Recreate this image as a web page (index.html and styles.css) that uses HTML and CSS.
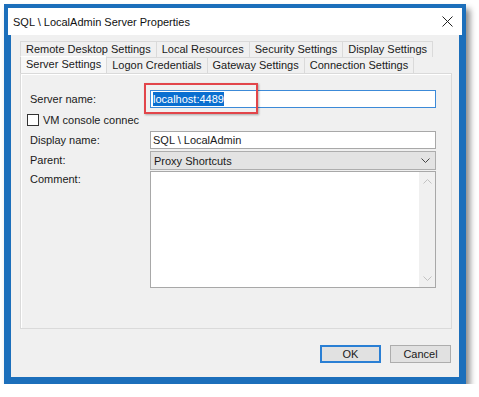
FILE: index.html
```html
<!DOCTYPE html>
<html lang="en">
<head>
  <meta charset="UTF-8">
  <title>SQL \ LocalAdmin Server Properties</title>
  <link rel="stylesheet" href="styles.css">
</head>
<body>

  <div class="window">
    <div class="titlebar">
      <span>SQL \ LocalAdmin Server Properties</span>
      <svg class="close" width="11" height="11" viewBox="0 0 11 11">
        <path d="M0.5 0.5 L10.5 10.5 M10.5 0.5 L0.5 10.5" stroke="#222" stroke-width="1" fill="none"/>
      </svg>
    </div>

    <div class="dialog">
      <!-- tab strip, two rows -->
      <div class="tab-row">
        <div class="tab">Remote Desktop Settings</div>
        <div class="tab">Local Resources</div>
        <div class="tab">Security Settings</div>
        <div class="tab">Display Settings</div>
      </div>
      <div class="tab-row">
        <div class="tab active">Server Settings</div>
        <div class="tab">Logon Credentials</div>
        <div class="tab">Gateway Settings</div>
        <div class="tab">Connection Settings</div>
      </div>

      <div class="panel">
        <div class="form">
          <label class="lbl">Server name:</label>
          <div class="field focused"><span class="selected">localhost:4489</span></div>

          <div class="check-row">
            <span class="checkbox"></span>
            <span class="check-label">VM console connec</span>
          </div>

          <label class="lbl">Display name:</label>
          <div class="field">SQL \ LocalAdmin</div>

          <label class="lbl">Parent:</label>
          <div class="select">
            <span>Proxy Shortcuts</span>
            <svg width="9" height="6" viewBox="0 0 9 6"><path d="M0.5 0.5 L4.5 4.5 L8.5 0.5" stroke="#444" fill="none"/></svg>
          </div>

          <label class="lbl comment-lbl">Comment:</label>
          <div class="textarea">
            <div class="scrollbar">
              <svg width="9" height="6" viewBox="0 0 9 6"><path d="M0.5 5.5 L4.5 1.5 L8.5 5.5" stroke="#c2c2c2" fill="none"/></svg>
              <svg width="9" height="6" viewBox="0 0 9 6"><path d="M0.5 0.5 L4.5 4.5 L8.5 0.5" stroke="#c2c2c2" fill="none"/></svg>
            </div>
          </div>
        </div>

        <!-- annotation box drawn over the screenshot -->
        <div class="callout"></div>
      </div>

      <div class="buttons">
        <button class="btn default">OK</button>
        <button class="btn">Cancel</button>
      </div>
    </div>
  </div>

</body>
</html>
```

FILE: styles.css
```css
body {
  margin: 0;
  background-color: #fff;
  font-family: "Liberation Sans", Arial, sans-serif;
  font-size: 11px;
  color: #1a1a1a;
}
.window {
  margin: 4px 0 0 4px;
  width: 462px;
  height: 380px;
  box-sizing: border-box;
  border: 4px solid #1c6fbb;
  display: flex;
  flex-direction: column;
  box-shadow: 4px 5px 6px rgba(0, 0, 0, 0.45);
}
.titlebar {
  height: 27px;
  background-color: #fff;
  display: flex;
  align-items: center;
  justify-content: space-between;
  padding: 0 9px 0 5px;
  font-size: 11px;
  color: #111;
}
.dialog {
  flex: 1;
  background-color: #f0f0f0;
  border: 3px solid #1c6fbb;
  border-top: none;
  padding: 6px 8px 0 9px;
  display: flex;
  flex-direction: column;
}
.tab-row {
  display: flex;
  height: 16px;
}
.tab {
  box-sizing: border-box;
  height: 16px;
  line-height: 14px;
  padding: 0 5px;
  border: 1px solid #dadada;
  border-bottom: none;
  margin-right: -1px;
  background-color: #f0f0f0;
  white-space: nowrap;
}
.tab.active {
  background-color: #f7f7f7;
  border-color: #fff;
  border-left-color: #d0d0d0;
  border-right-color: #d0d0d0;
  height: 17px;
  margin-top: -1px;
}
.panel {
  position: relative;
  box-sizing: border-box;
  width: 432px;
  height: 256px;
  border: 1px solid #dadada;
  box-shadow: inset 1px 1px 0 #fff;
  padding: 16px 0 0 9px;
}
.form {
  display: grid;
  grid-template-columns: 120px 286px;
  align-items: center;
}
.lbl {
  color: #1a1a1a;
}
.field {
  box-sizing: border-box;
  height: 18px;
  line-height: 16px;
  padding: 0 2px;
  border: 1px solid #a8a8a8;
  background-color: #fff;
  white-space: nowrap;
}
.field.focused {
  border-color: #3c8ad8;
}
.selected {
  background-color: #0a6fd0;
  color: #fff;
  padding: 1px 0;
}
.check-row {
  grid-column: 1 / 3;
  display: flex;
  align-items: center;
  gap: 4px;
  height: 23px;
  margin-left: -3px;
}
.checkbox {
  box-sizing: border-box;
  width: 12px;
  height: 12px;
  border: 1px solid #333;
  background-color: #fff;
}
.check-label {
  white-space: nowrap;
}
.select {
  box-sizing: border-box;
  height: 19px;
  margin-top: 2px;
  padding: 0 5px 0 3px;
  border: 1px solid #adadad;
  background-color: #e3e3e3;
  display: flex;
  align-items: center;
  justify-content: space-between;
}
.comment-lbl {
  align-self: start;
  margin-top: 3px;
}
.textarea {
  box-sizing: border-box;
  height: 117px;
  margin-top: 1px;
  border: 1px solid #a8a8a8;
  background-color: #fff;
  display: flex;
  justify-content: flex-end;
}
.scrollbar {
  width: 16px;
  background-color: #f0f0f0;
  display: flex;
  flex-direction: column;
  justify-content: space-between;
  align-items: center;
  padding: 6px 0 5px;
}
.callout {
  position: absolute;
  left: 123px;
  top: 9px;
  width: 114px;
  height: 31px;
  box-sizing: border-box;
  border: 2px solid #e2454a;
  box-shadow: 1px 1px 2px rgba(0, 0, 0, 0.3);
}
.buttons {
  display: flex;
  justify-content: flex-end;
  gap: 9px;
  margin-top: 16px;
}
.btn {
  box-sizing: border-box;
  width: 61px;
  height: 18px;
  padding: 0;
  font-family: "Liberation Sans", Arial, sans-serif;
  font-size: 11px;
  color: #1a1a1a;
  background-color: #e1e1e1;
  border: 1px solid #adadad;
}
.btn.default {
  border: 2px solid #2a7fd4;
}
```
